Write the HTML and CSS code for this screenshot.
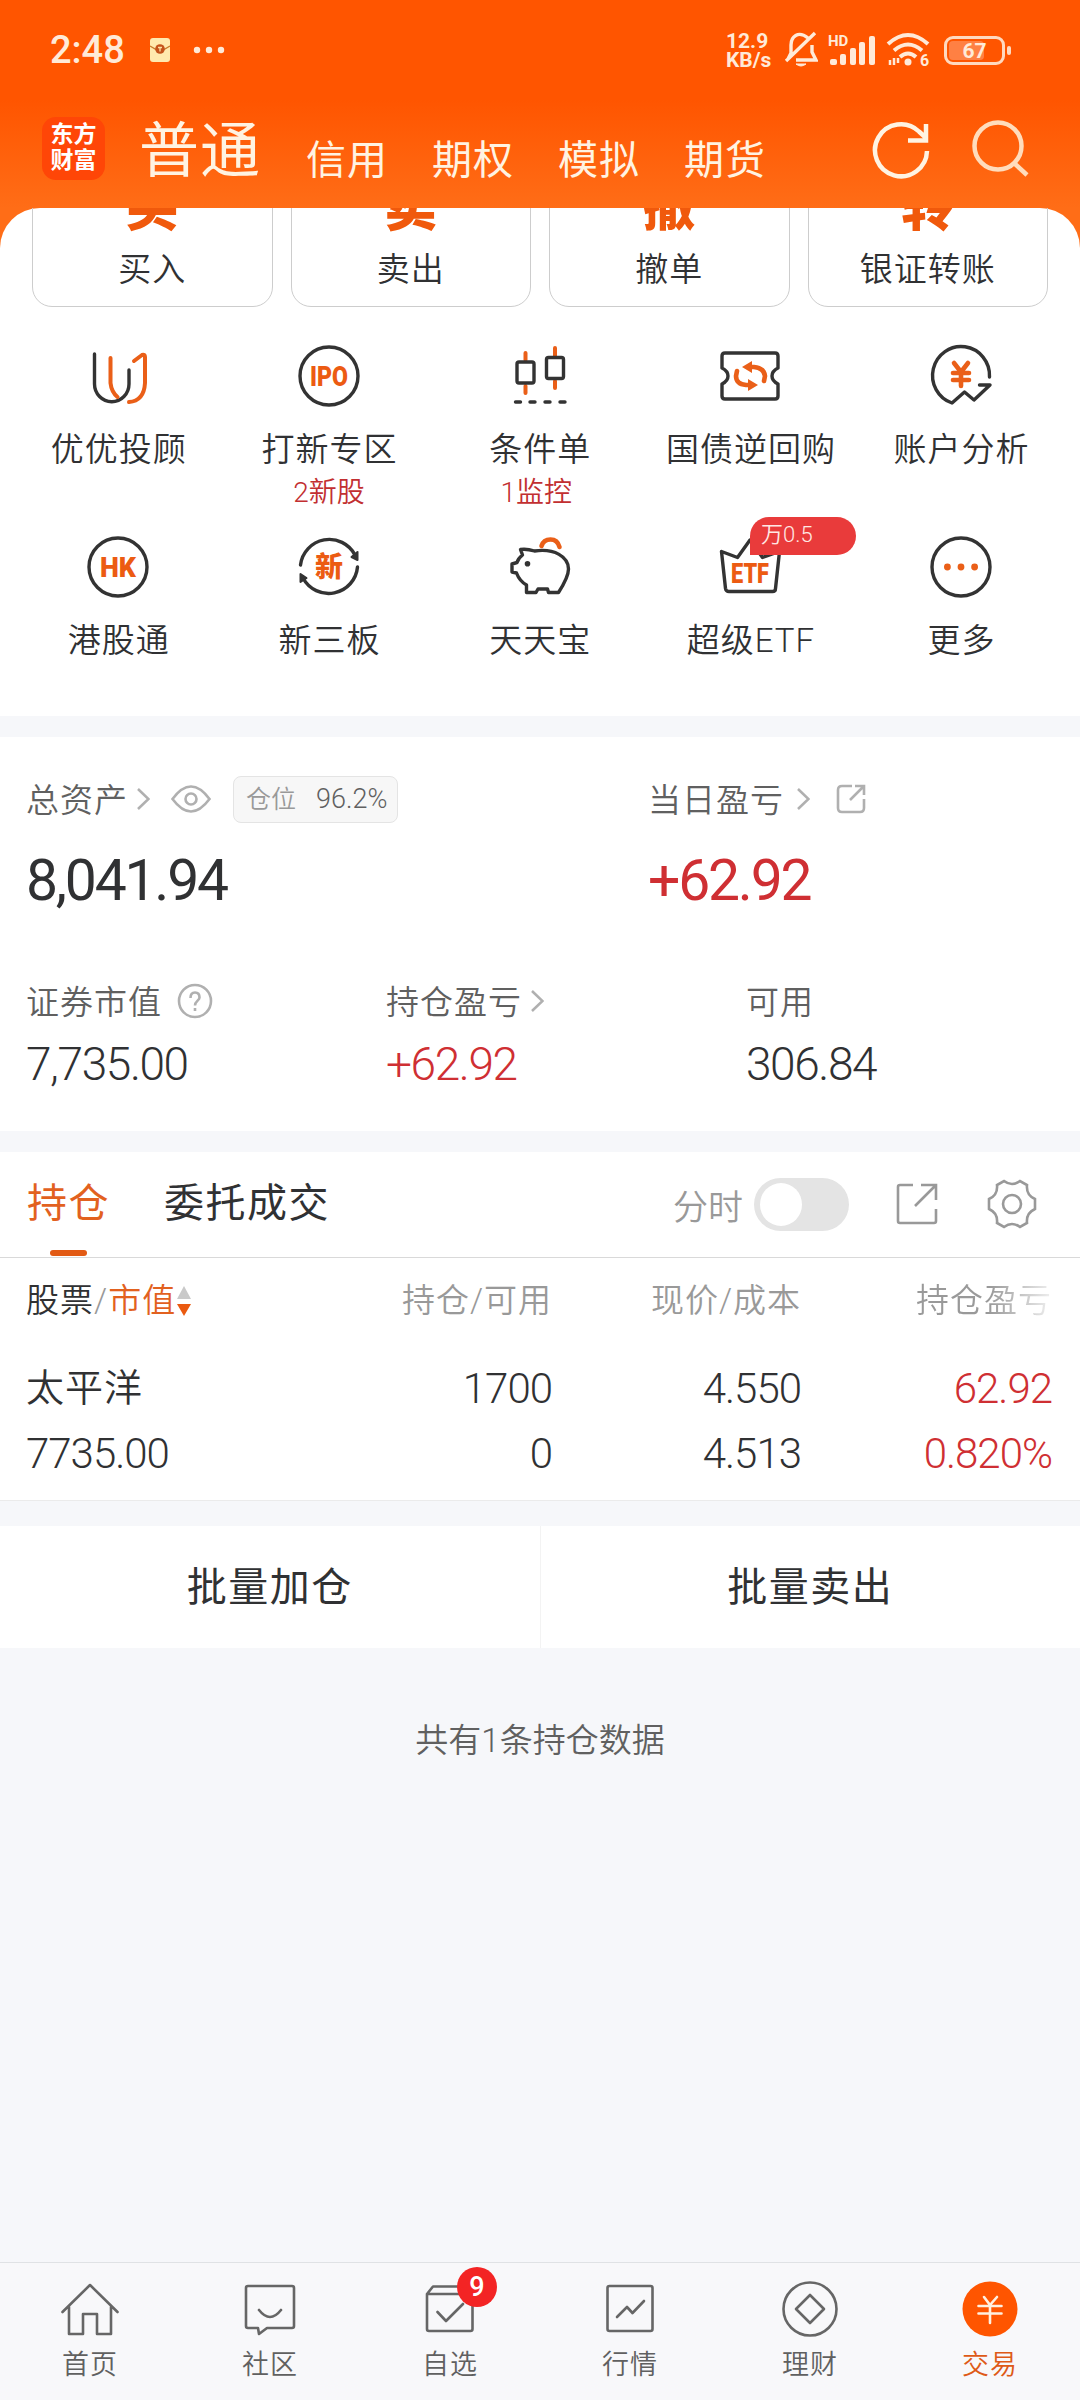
FILE: index.html
```html
<!DOCTYPE html>
<html lang="zh-CN">
<head>
    <meta charset="UTF-8">
    <meta name="viewport" content="width=device-width, initial-scale=1.0">
    <title>交易</title>
    <link rel="stylesheet" href="styles.css">
</head>
<body>
<div class="app">
  <header>
    <div class="status">
      <span class="time">2:48</span>
      <svg class="envelope" width="20" height="24" viewBox="0 0 20 24"><rect width="20" height="24" rx="3" fill="#ffe9ae"/><path d="M0 8l7 4h6l7-4" fill="none" stroke="#c8792a" stroke-width="1.3"/><circle cx="10" cy="11" r="4.8" fill="#c5521a"/><path d="M8 9.5h4M10 9.5v4" stroke="#ffe0a0" stroke-width="1.3"/></svg>
      <svg class="dots" width="32" height="8" viewBox="0 0 32 8" fill="#ffead8"><circle cx="4" cy="4" r="3.2"/><circle cx="16" cy="4" r="3.2"/><circle cx="28" cy="4" r="3.2"/></svg>
      <div class="speed">12.9<br>KB/s</div>
      <svg class="bell" width="34" height="38" viewBox="0 0 34 38" fill="none" stroke="#ffead8" stroke-width="3.4"><path d="M24 7C14-1 7 6 7 14v8l-3 6M28 14v7l4 8H12M2 30L31 2"/><path d="M12 33q5 4 10 0z" fill="#ffead8" stroke-width="1"/></svg>
      <svg class="signal" width="48" height="34" viewBox="0 0 48 34" fill="#ffead8"><text x="0" y="13" font-size="15" font-weight="700">HD</text><rect x="2" y="26" width="7" height="6" rx="2"/><rect x="12" y="21" width="6" height="11" rx="2"/><rect x="22" y="15" width="6" height="17" rx="2"/><rect x="31" y="9" width="6" height="23" rx="2"/><rect x="41" y="3" width="6" height="29" rx="2"/></svg>
      <svg class="wifi" width="44" height="36" viewBox="0 0 44 36" fill="none" stroke="#ffead8" stroke-width="4"><path d="M2 12q20-18 40 0M8 18.500q14-12 28 0M14 25q8-7 16 0"/><circle cx="22" cy="30" r="3.500" fill="#ffead8" stroke="none"/><path d="M4 28v5M8 26v7M12 26v5" stroke-width="2.500"/><text x="34" y="34" font-size="16" font-weight="700" fill="#ffead8" stroke="none">6</text></svg>
      <div class="battery"><i></i><b>67</b></div>
    </div>
    <nav class="top-nav">
      <div class="logo">东方<br>财富</div>
      <ul>
        <li class="current">普通</li>
        <li>信用</li>
        <li>期权</li>
        <li>模拟</li>
        <li>期货</li>
      </ul>
      <svg class="refresh" width="60" height="60" viewBox="0 0 60 60" fill="none" stroke="#fff3e2" stroke-width="4.500"><path d="M56 31A26 26 0 1 1 48 11.500L54 17M55 4v16.500H37"/></svg>
      <svg class="search" width="60" height="60" viewBox="0 0 60 60" fill="none" stroke="#ffdcbc" stroke-width="4.500"><circle cx="28" cy="26" r="23.500"/><path d="M44 43l13 12"/></svg>
    </nav>
  </header>

  <section class="panel">
    <div class="cards">
      <div class="card"><b>买</b><span>买入</span></div>
      <div class="card"><b>卖</b><span>卖出</span></div>
      <div class="card"><b>撤</b><span>撤单</span></div>
      <div class="card"><b>转</b><span>银证转账</span></div>
    </div>

    <div class="menu">
      <div class="item">
        <svg viewBox="0 0 80 80"><path d="M16.500 18v30a17 17.500 0 0 0 34.500 0V34"/><path class="o" d="M32.500 22v25q1 9 7 14M56 25l8-6q3-1 3 2v26q-1 18-16 19"/></svg>
        <span>优优投顾</span>
      </div>
      <div class="item">
        <svg viewBox="0 0 80 80"><circle cx="40" cy="40" r="29"/><text x="40" y="49.500" textLength="38" lengthAdjust="spacingAndGlyphs">IPO</text></svg>
        <span>打新专区</span><em>2新股</em>
      </div>
      <div class="item">
        <svg viewBox="0 0 80 80"><path class="o" d="M25.500 17v7M25.500 50v7M55 12v8M55 45v7"/><rect x="17" y="26" width="17" height="21" rx="2"/><rect x="46.500" y="21.500" width="17" height="21" rx="2"/><path d="M15.500 66h5M30 66h5M45 66h5M60 66h5"/></svg>
        <span>条件单</span><em class="left">1监控</em>
      </div>
      <div class="item">
        <svg viewBox="0 0 80 80"><path d="M15 17h50q3 0 3 3v12q-6 3-6 8t6 8v12q0 3-3 3H15q-3 0-3-3V48q6-3 6-8t-6-8V20q0-3 3-3z"/><path class="o wide" d="M39 31h5q10 1 11 9l-1 5M41 49h-5q-10-1-10-9l1-5"/><path class="fill" d="M32 31l10-6v12zM48 49l-10-6v12z"/></svg>
        <span>国债逆回购</span>
      </div>
      <div class="item">
        <svg viewBox="0 0 80 80"><path d="M68.500 41A28.500 29 0 1 0 31 67l12.500-11L53 64l16-15H58.500"/><path class="o wide" d="M33 27l7 9 7-9M40 36v14M32 37h16M32 44h16"/></svg>
        <span>账户分析</span>
      </div>
      <div class="item">
        <svg viewBox="0 0 80 80"><circle cx="40" cy="40" r="29"/><text x="40" y="49.500" textLength="36" lengthAdjust="spacingAndGlyphs">HK</text></svg>
        <span>港股通</span>
      </div>
      <div class="item">
        <svg viewBox="0 0 80 80"><path d="M11.500 38A29 29 0 0 1 66 28M68.500 40A29 29 0 0 1 14 51"/><path class="dark" d="M68.500 25v8l-6-3zM11.500 55v-8l6 4z"/><text class="cn" x="40" y="50">新</text></svg>
        <span>新三板</span>
      </div>
      <div class="item">
        <svg viewBox="0 0 80 80"><path d="M20.500 22.500q6-1 14 1.500c20-3 34 6 34 18q0 8-10 23.500h-10l-1-3.500H38l-2 3.500H26.500V58q-7-4-10-12l-4.500-1v-8l5-1.500q1-4 5.500-7.500z"/><circle class="dark" cx="27.500" cy="36.700" r="1.800"/><path class="o wide" d="M41.500 19q2-6.500 9-6.500t9 7.500"/></svg>
        <span>天天宝</span>
      </div>
      <div class="item">
        <svg viewBox="0 0 80 80"><path d="M11.500 24.500l16 6L40 13l12.500 17.500 17-6-4 37q0 3-3 3H19q-3 0-3.500-3z"/><text x="40" y="55.500" textLength="38" lengthAdjust="spacingAndGlyphs">ETF</text></svg>
        <span>超级ETF</span>
        <i class="tag">万0.5</i>
      </div>
      <div class="item">
        <svg viewBox="0 0 80 80"><circle cx="40" cy="40" r="29"/><path class="fill" d="M23 40a3.400 3.400 0 1 1 6.800 0 3.400 3.400 0 1 1-6.800 0M36.600 40a3.400 3.400 0 1 1 6.800 0 3.400 3.400 0 1 1-6.800 0M50.200 40a3.400 3.400 0 1 1 6.800 0 3.400 3.400 0 1 1-6.800 0"/></svg>
        <span>更多</span>
      </div>
    </div>
  </section>

  <section class="assets">
    <div class="row big">
      <div>
        <h3>总资产
          <svg class="arrow" width="13" height="22" viewBox="0 0 13 22"><path d="M1 1l10.500 10L1 21"/></svg>
          <svg class="eye" width="40" height="28" viewBox="0 0 40 28"><path d="M1.500 14Q20-11 38.500 14 20 39 1.500 14z"/><circle cx="20" cy="14" r="5.500"/></svg>
          <span class="ratio"><i>仓位</i>96.2%</span>
        </h3>
        <p>8,041.94</p>
      </div>
      <div>
        <h3>当日盈亏
          <svg class="arrow wider" width="13" height="22" viewBox="0 0 13 22"><path d="M1 1l10.500 10L1 21"/></svg>
          <svg class="share" width="30" height="30" viewBox="0 0 30 30"><path d="M16 2H6Q2 2 2 6v18q0 4 4 4h18q4 0 4-4V15M14 16L28 2M19 2h9v9"/></svg>
        </h3>
        <p class="red">+62.92</p>
      </div>
    </div>
    <div class="row">
      <div>
        <h3>证券市值
          <svg class="help" width="36" height="36" viewBox="0 0 36 36"><circle cx="18" cy="18" r="16"/><path d="M13.500 15q0-5.500 4.500-5.500t4.500 5c0 3-4.500 3.500-4.500 8M18 25v3"/></svg>
        </h3>
        <p>7,735.00</p>
      </div>
      <div>
        <h3>持仓盈亏
          <svg class="arrow" width="13" height="22" viewBox="0 0 13 22"><path d="M1 1l10.500 10L1 21"/></svg>
        </h3>
        <p class="red">+62.92</p>
      </div>
      <div>
        <h3>可用</h3>
        <p>306.84</p>
      </div>
    </div>
  </section>

  <section class="holdings">
    <div class="tabs">
      <span class="tab active">持仓</span>
      <span class="tab">委托成交</span>
      <span class="mini">分时</span>
      <span class="switch"></span>
      <svg class="export" width="44" height="44" viewBox="0 0 44 44"><path d="M18 3H5Q3 3 3 5v34q0 2 2 2h34q2 0 2-2V27M20 24L41 3M26 3h15v15"/></svg>
      <svg class="gear" width="50" height="50" viewBox="0 0 50 50"><path d="M17 2q8 6 16 0l7 4q-1 10 8 14v10q-9 4-8 14l-7 4q-8-6-16 0l-7-4q1-10-8-14V20q9-4 8-14z"/><circle cx="25" cy="25" r="9"/></svg>
    </div>
    <div class="line head">
      <span>股票<u>/</u><b>市值</b><svg width="16" height="32" viewBox="0 0 16 32"><path d="M8 1l7 13H1z" fill="#c9c9c9"/><path d="M8 31l7-12H1z" fill="#ea5a10"/></svg></span>
      <span>持仓/可用</span>
      <span>现价/成本</span>
      <span class="fade">持仓盈亏</span>
    </div>
    <div class="line">
      <span class="name">太平洋</span><span>1700</span><span>4.550</span><span class="red">62.92</span>
    </div>
    <div class="line">
      <span>7735.00</span><span>0</span><span>4.513</span><span class="red">0.820%</span>
    </div>
  </section>

  <section class="batch">
    <span>批量加仓</span>
    <span>批量卖出</span>
  </section>

  <p class="total">共有1条持仓数据</p>

  <footer>
    <a><svg viewBox="0 0 60 60"><path d="M2.500 33L30 6l27.500 27M9 28v27h14V35h14v20h14V28"/></svg>首页</a>
    <a><svg viewBox="0 0 60 60"><path d="M8 7h44q2 0 2 2v38q0 2-2 2H27l-8 6-1-6H8q-2 0-2-2V9q0-2 2-2zM19 31q11 14 22 0"/></svg>社区</a>
    <a><svg viewBox="0 0 60 60"><path d="M7 15l6-7.500h35l4.500 7.500M7 15h45.500v35q0 2-2 2H9q-2 0-2-2zM17.500 33l8.500 9 17-17"/></svg>自选<i class="count">9</i></a>
    <a><svg viewBox="0 0 60 60"><rect x="7.500" y="7" width="45" height="45" rx="2"/><path d="M17 38l10-10 5.500 6L44 22"/></svg>行情</a>
    <a><svg viewBox="0 0 60 60"><circle cx="30" cy="30" r="26.500"/><path d="M30 16l14 14-14 14-14-14z"/></svg>理财</a>
    <a class="on"><svg viewBox="0 0 60 60"><circle cx="30" cy="30" r="27.500"/><path d="M24 18l6 8 7-8M30 26v18M18.500 27h23M18.500 34.500h23"/></svg>交易</a>
  </footer>
</div>
</body>
</html>
```

FILE: styles.css
```css
* {
  box-sizing: border-box;
}
body {
  margin: 0;
  background: #f6f7fa;
  color: #303133;
  font-family: Roboto, "Noto Sans CJK SC", sans-serif;
  font-weight: 350;
}
h3, p, ul {
  margin: 0;
  padding: 0;
  font-weight: 350;
}
i, em, u {
  font-style: normal;
  text-decoration: none;
}
svg {
  flex: none;
  display: block;
}
.app {
  width: 1080px;
  height: 2400px;
  display: flex;
  flex-direction: column;
  overflow: hidden;
}
.red {
  color: #cf2f33;
}

/* header */
header {
  height: 248px;
  flex: none;
  background: linear-gradient(#ff5500 0, #ff5500 100px, #ff6d17 208px);
  color: #fff3e2;
}
.status {
  display: flex;
  align-items: center;
  height: 100px;
  padding-left: 50px;
}
.time {
  font-size: 38px;
  font-weight: 500;
  width: 100px;
  color: #ffead8;
}
.dots {
  margin-left: 23px;
}
.speed {
  width: 52px;
  margin-left: 501px;
  font-size: 21px;
  line-height: 19px;
  font-weight: 700;
  color: #ffead8;
  padding-top: 1px;
}
.bell {
  margin-left: 6px;
}
.signal {
  margin-left: 10px;
}
.wifi {
  margin-left: 10px;
}
.battery {
  position: relative;
  width: 61px;
  height: 29px;
  margin-left: 14px;
  border: 3px solid #ffd9bf;
  border-radius: 9px;
  text-align: center;
  color: #ffead8;
}
.battery i {
  position: absolute;
  left: 2px;
  top: 2px;
  width: 35px;
  height: 19px;
  border-radius: 4px;
  background: #ff8043;
}
.battery b {
  position: relative;
  display: block;
  font-size: 21px;
  line-height: 24px;
}
.battery::after {
  content: "";
  position: absolute;
  right: -9px;
  top: 7px;
  width: 4px;
  height: 9px;
  border-radius: 2px;
  background: #ffd9bf;
}
.top-nav {
  display: flex;
  height: 108px;
  padding-left: 42px;
}
.logo {
  width: 63px;
  height: 63px;
  margin-top: 17px;
  padding-top: 5px;
  border-radius: 14px;
  background: #ff4607;
  color: #fff;
  font-size: 23px;
  line-height: 26px;
  font-weight: 700;
  text-align: center;
}
.top-nav ul {
  display: flex;
  list-style: none;
  padding-left: 34px;
  width: 766px;
}
.top-nav li {
  width: 126px;
  font-size: 40px;
  line-height: 58px;
  padding-top: 32px;
  font-weight: 400;
  letter-spacing: 1px;
}
.top-nav li.current {
  width: 167px;
  font-size: 60px;
  line-height: 60px;
  padding-top: 22px;
  letter-spacing: 1px;
}
.refresh {
  margin-top: 20px;
}
.search {
  margin: 20px 0 0 39px;
}

/* shortcuts */
.panel {
  height: 508px;
  flex: none;
  margin-top: -40px;
  background: #fff;
  border-radius: 40px 40px 0 0;
}
.cards {
  display: flex;
  gap: 18px;
  height: 100px;
  padding: 0 32px;
  overflow: hidden;
}
.card {
  flex: 1;
  height: 149px;
  margin-top: -50px;
  border: 1px solid #cdcdcd;
  border-radius: 20px;
  text-align: center;
}
.card b {
  display: block;
  font-size: 53px;
  line-height: 60px;
  height: 60px;
  margin-top: 19px;
  color: #f0590c;
  font-weight: 900;
}
.card span {
  display: block;
  font-size: 33px;
  line-height: 40px;
  margin-top: 12px;
  letter-spacing: 1px;
}
.menu {
  display: grid;
  grid-template-columns: repeat(5, 210.7px);
  grid-auto-rows: 191px;
  padding: 28px 0 0 13px;
}
.item {
  position: relative;
  text-align: center;
}
.item svg {
  width: 80px;
  height: 80px;
  margin: 0 auto;
  fill: none;
  stroke: #333;
  stroke-width: 3.4;
  stroke-linecap: round;
  stroke-linejoin: round;
}
.item svg text {
  fill: #ec5b12;
  stroke: none;
  font-size: 27px;
  font-weight: 900;
  text-anchor: middle;
}
.item svg .cn {
  font-size: 28px;
}
.item svg .o {
  stroke: #ea5f18;
  stroke-width: 4;
}
.item svg .wide {
  stroke-width: 4.6;
}
.item svg .fill {
  fill: #ea5f18;
  stroke: none;
}
.item svg .dark {
  fill: #333;
  stroke-width: 2;
}
.item span {
  display: block;
  font-size: 33px;
  line-height: 40px;
  margin-top: 14px;
  padding-left: 1px;
  letter-spacing: 1px;
}
.item em {
  display: block;
  font-size: 28px;
  line-height: 36px;
  margin-top: 5px;
  color: #c22f31;
}
.item em.left {
  margin-right: 7px;
}
.tag {
  position: absolute;
  left: 105px;
  top: -10px;
  width: 106px;
  height: 38px;
  padding-left: 11px;
  border-radius: 19px 19px 19px 0;
  background: #e93b3b;
  color: #ffe8e4;
  font-size: 22px;
  line-height: 36px;
  text-align: left;
}

/* assets */
.assets {
  height: 394px;
  flex: none;
  margin-top: 21px;
  padding: 36px 0 0 26px;
  background: #fff;
}
.row {
  display: flex;
  height: 200px;
}
.row > div {
  flex: none;
  width: 360px;
}
.row.big > div {
  width: 622px;
}
.row.big > div + div {
  width: 400px;
}
.assets h3 {
  display: flex;
  align-items: center;
  height: 50px;
  color: #606060;
  font-size: 33px;
  letter-spacing: 1px;
  white-space: nowrap;
}
.assets svg {
  position: relative;
  top: 1px;
  fill: none;
  stroke: #b0b0b0;
  stroke-width: 2.6;
}
.assets .arrow {
  margin-left: 9px;
}
.assets .wider {
  margin-left: 13px;
}
.eye {
  margin-left: 21px;
}
.ratio {
  width: 165px;
  height: 47px;
  margin: 2px 0 0 22px;
  border: 1px solid #e4e4e4;
  border-radius: 8px;
  background: #f7f7f7;
  padding-left: 12px;
  font-size: 27px;
  line-height: 44px;
  letter-spacing: 0;
}
.ratio i {
  display: inline-block;
  width: 70px;
  color: #999;
  font-size: 25px;
}
.share {
  margin-left: 26px;
}
.help {
  margin-left: 15px;
}
.assets p {
  font-size: 46px;
  font-weight: 350;
  line-height: 60px;
  margin-top: 9px;
  letter-spacing: -1.4px;
}
.assets .big p {
  font-size: 57px;
  font-weight: 400;
  margin-top: 28px;
  line-height: 60px;
  letter-spacing: -2.2px;
}
.row + .row {
  padding-top: 2px;
}

/* holdings */
.holdings {
  height: 349px;
  flex: none;
  margin-top: 21px;
  background: #fff;
  border-bottom: 1px solid #ebebeb;
}
.tabs {
  display: flex;
  align-items: center;
  height: 106px;
  padding: 0 43px 1px 27px;
  border-bottom: 1px solid #d9d9d9;
}
.tab {
  position: relative;
  margin-right: 54px;
  font-size: 40px;
  line-height: 60px;
  letter-spacing: 1.5px;
  font-weight: 400;
}
.active {
  color: #e2611f;
}
.active::after {
  content: "";
  position: absolute;
  left: 23px;
  bottom: -22px;
  width: 37px;
  height: 6px;
  border-radius: 3px;
  background: #e25a14;
}
.mini {
  margin-left: auto;
  color: #999;
  font-size: 35px;
}
.switch {
  width: 95px;
  height: 53px;
  margin-left: 11px;
  padding: 5px 6px;
  border-radius: 27px;
  background: #e4e4e4;
}
.switch::after {
  content: "";
  display: block;
  width: 42px;
  height: 43px;
  border-radius: 50%;
  background: #fff;
}
.tabs svg {
  fill: none;
  stroke: #999;
  stroke-width: 2.6;
}
.export {
  margin-left: 46px;
}
.gear {
  margin-left: 48px;
}
.line {
  display: grid;
  grid-template-columns: 253px 273px 249px 251px;
  height: 65px;
  padding-left: 26px;
  font-size: 42px;
  line-height: 65px;
  letter-spacing: -1px;
  text-align: right;
}
.line span:first-child {
  text-align: left;
}
.head {
  height: 98px;
  padding-top: 10px;
  font-size: 33px;
  letter-spacing: 1px;
  color: #999;
}
.head span:first-child {
  display: flex;
  align-items: center;
  height: 65px;
  color: #303133;
}
.head u {
  color: #999;
}
.head b {
  color: #e2611f;
  font-weight: 350;
}
.fade {
  background: linear-gradient(90deg, #999 75%, #f0f0f0 100%);
  -webkit-background-clip: text;
  background-clip: text;
  color: transparent;
}
.line .name {
  font-size: 38px;
  letter-spacing: 1px;
}

/* batch buttons */
.batch {
  display: flex;
  height: 122px;
  flex: none;
  margin-top: 25px;
  background: #fff;
}
.batch span {
  flex: 1;
  text-align: center;
  font-size: 40px;
  line-height: 124px;
  letter-spacing: 1.5px;
  font-weight: 400;
}
.batch span + span {
  border-left: 1px solid #f3f3f3;
}
.total {
  padding-top: 71px;
  font-size: 33px;
  line-height: 44px;
  letter-spacing: 0;
  text-align: center;
  color: #606060;
}

/* bottom nav */
footer {
  display: flex;
  height: 138px;
  margin-top: auto;
  border-top: 1px solid #e0e2e5;
  background: #f8f8fa;
}
footer a {
  position: relative;
  flex: 1;
  text-align: center;
  font-size: 27px;
  line-height: 36px;
  letter-spacing: 1px;
  color: #606060;
}
footer svg {
  width: 60px;
  height: 60px;
  margin: 16px auto 8px;
  fill: none;
  stroke: #666;
  stroke-width: 2.6;
  stroke-linecap: round;
  stroke-linejoin: round;
}
footer .on {
  color: #de5a17;
}
.on svg circle {
  fill: #ff5500;
  stroke: none;
}
.on svg {
  stroke: #fff0e0;
}
.count {
  position: absolute;
  left: 97px;
  top: 4px;
  width: 40px;
  height: 40px;
  border-radius: 50%;
  background: #f32424;
  color: #fff;
  font-size: 27px;
  font-weight: 500;
  line-height: 40px;
  letter-spacing: 0;
}
```
